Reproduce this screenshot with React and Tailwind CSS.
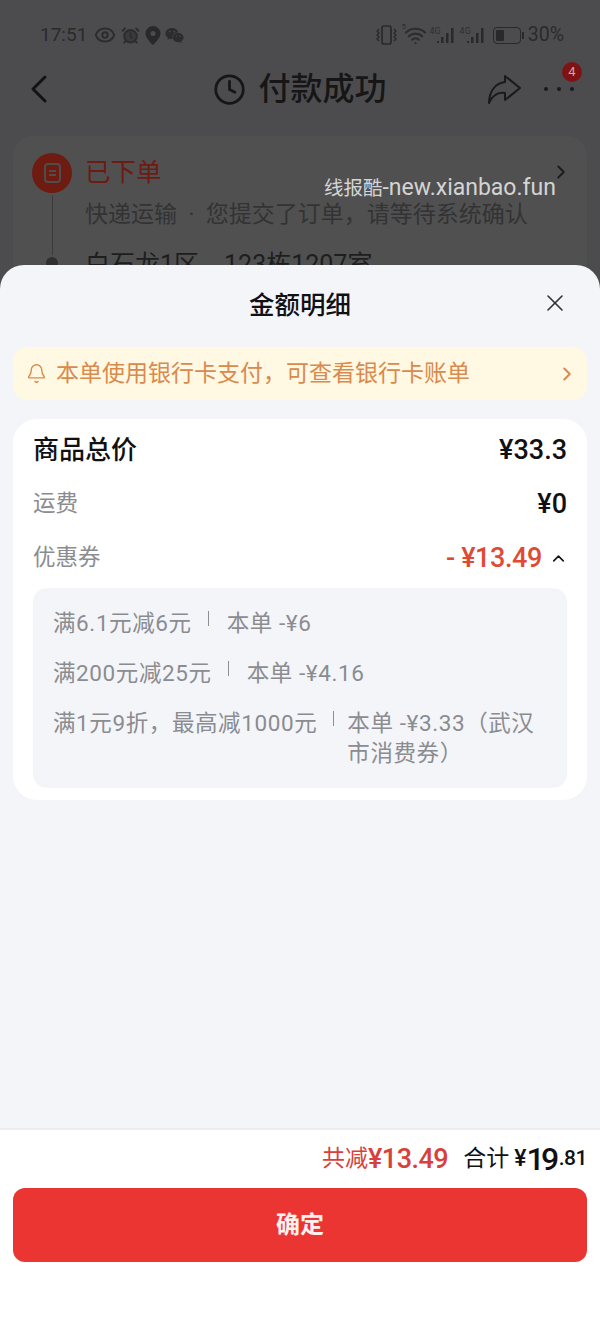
import { ChevronLeft, ChevronRight, ChevronUp, Clock, Bell, X, Wifi, Eye, AlarmClock } from "lucide-react";
import { FaWeixin } from "react-icons/fa";

const font = "font-['Roboto','Noto_Sans_CJK_SC',sans-serif]";

function Signal() {
  return (
    <div className="flex items-end">
      <span className="mb-[9px] text-[9px] leading-none text-[#2f2f30]">4G</span>
      <svg width="20" height="20" viewBox="0 0 20 20" className="-ml-[7px]">
        <rect x="3" y="16" width="2" height="2" fill="#29292a" />
        <rect x="7" y="12" width="2.5" height="6" fill="#29292a" />
        <rect x="12" y="8" width="2.5" height="10" fill="#29292a" />
        <rect x="17" y="3" width="2.5" height="15" fill="#29292a" />
      </svg>
    </div>
  );
}

function StatusBar() {
  return (
    <div className="flex h-[56px] items-center justify-between pl-[40px] pr-[36px] pt-[14px] text-[#2c2c2d]">
      <div className="flex items-center">
        <span className="text-[19px] text-[#2a2a2b]">17:51</span>
        <Eye size={22} strokeWidth={2.2} className="ml-[7px]" />
        <AlarmClock size={19} strokeWidth={2.4} className="ml-[5px] fill-[#3a3a3b]" />
        <svg width="16" height="19" viewBox="0 0 16 19" className="ml-[5px]">
          <path fillRule="evenodd" fill="#29292a" d="M8 0a7.5 7.5 0 0 1 7.5 7.5C15.5 12.5 8 19 8 19S.5 12.5.5 7.5A7.5 7.5 0 0 1 8 0Zm0 5a2.5 2.5 0 1 0 0 5 2.5 2.5 0 0 0 0-5Z" />
        </svg>
        <FaWeixin size={19} className="ml-[4px]" />
      </div>
      <div className="flex items-center">
        <svg width="21" height="22" viewBox="0 0 21 22" fill="none" stroke="#29292a" strokeWidth="1.7">
          <rect x="6" y="2" width="9" height="18" rx="2" />
          <path d="M3 5l-2 2 2 2-2 2 2 2-2 2 2 2M18 5l2 2-2 2 2 2-2 2 2 2-2 2" strokeWidth="1.3" />
        </svg>
        <div className="relative ml-[5px]">
          <span className="absolute -left-[1px] -top-[1px] text-[8px] leading-none">5</span>
          <Wifi size={23} strokeWidth={2.2} className="ml-[2px]" />
        </div>
        <div className="ml-[2px]"><Signal /></div>
        <div className="ml-[6px]"><Signal /></div>
        <div className="ml-[9px] flex items-center">
          <div className="flex h-[17px] w-[28px] items-center rounded-[4px] border-[1.5px] border-[#29292a] p-[2px]">
            <div className="h-full w-[8px] rounded-[1px] bg-[#29292a]" />
          </div>
          <div className="ml-[1px] h-[7px] w-[2px] bg-[#29292a]" />
        </div>
        <span className="ml-[4px] text-[19.5px] text-[#2a2a2b]">30%</span>
      </div>
    </div>
  );
}

function DimmedPage() {
  return (
    <div className="relative h-[265px] overflow-hidden">
      <StatusBar />
      <div className="relative flex h-[66px] items-center justify-center">
        <ChevronLeft size={48} strokeWidth={1.5} className="absolute left-[15px] text-[#131314]" />
        <Clock size={33} strokeWidth={2} className="text-[#161617]" />
        <span className="ml-[12px] text-[32px] font-medium leading-none text-[#161617]">付款成功</span>
        <svg width="34" height="30" viewBox="0 0 34 30" fill="none" stroke="#1a1a1b" strokeWidth="2" strokeLinejoin="round" className="absolute left-[487px] top-[18px]">
          <path d="M18 2L33 14L18 26V19C10 18 5 22 2 29C2 18 8 9 18 8Z" />
        </svg>
        <div className="absolute left-[544px] top-[31px] flex gap-[9px]">
          <span className="h-[4px] w-[4px] rounded-full bg-[#1a1a1b]" />
          <span className="h-[4px] w-[4px] rounded-full bg-[#1a1a1b]" />
          <span className="h-[4px] w-[4px] rounded-full bg-[#1a1a1b]" />
        </div>
        <span className="absolute left-[562px] top-[6px] flex h-[20px] w-[20px] items-center justify-center rounded-full bg-[#7f1313] text-[13px] text-[#c9a7a7]">4</span>
      </div>
      <div className="mx-[13px] mt-[14px] h-[200px] rounded-t-[20px] bg-[#505051] pl-[19px] pr-[15px] pt-[17px]">
        <div className="flex">
          <div className="flex w-[40px] shrink-0 flex-col items-center">
            <div className="flex h-[40px] w-[40px] items-center justify-center rounded-full bg-[#6e1b12]">
              <div className="flex h-[20px] w-[17px] flex-col items-center justify-center gap-[2px] rounded-[4px] border-2 border-[#4d4d4e]">
                <span className="h-[2px] w-[7px] bg-[#4d4d4e]" />
                <span className="h-[2px] w-[7px] bg-[#4d4d4e]" />
              </div>
            </div>
            <div className="mt-[2px] h-[60px] w-px bg-[#3a3a3b]" />
            <div className="mt-[2px] h-[12px] w-[12px] rounded-full bg-[#303031]" />
          </div>
          <div className="ml-[13px] min-w-0 flex-1">
            <div className="flex items-start justify-between">
              <span className="text-[25.5px] leading-[38px] text-[#6e1b12]">已下单</span>
              <ChevronRight size={22} strokeWidth={2} className="mt-[8px] text-[#1b1b1c]" />
            </div>
            <div className="mt-[6px] whitespace-pre text-[23px] leading-[36px] text-[#333334]">快递运输  ·  您提交了订单，请等待系统确认</div>
            <div className="mt-[14px] whitespace-pre text-[25px] leading-[36px] text-[#1e1e1f]">白石龙1区，123栋1207室</div>
          </div>
        </div>
      </div>
      <div className="absolute left-[324px] top-[174px] whitespace-nowrap text-[19.5px] leading-[28px] text-[#d4d4d4]">
        线报酷<span className="text-[23px]">-new.xianbao.fun</span>
      </div>
    </div>
  );
}

function CouponRow({ rule, detail, gap = "mr-[18px]" }) {
  return (
    <div className="flex items-start">
      <span className="shrink-0 whitespace-nowrap">{rule}</span>
      <span className={`ml-[16px] mt-[3px] h-[15px] w-px shrink-0 bg-[#8d8e92] ${gap}`} />
      <span>{detail}</span>
    </div>
  );
}

function Sheet() {
  return (
    <div className="flex h-[1058px] flex-col rounded-t-[24px] bg-[#f4f5f9]">
      <div className="relative flex h-[82px] items-center justify-center">
        <span className="text-[25.5px] font-medium leading-none text-[#111114]">金额明细</span>
        <X size={28} strokeWidth={1.4} className="absolute right-[31px] top-[24px] text-[#333336]" />
      </div>
      <div className="mx-[13px] flex h-[53px] items-center rounded-[14px] bg-[#fff8e3] pl-[13px] pr-[9px] text-[#d98a4d]">
        <Bell size={21} strokeWidth={1.6} />
        <span className="ml-[9px] flex-1 text-[23px] leading-none">本单使用银行卡支付，可查看银行卡账单</span>
        <ChevronRight size={22} strokeWidth={2.2} />
      </div>
      <div className="mx-[13px] mt-[19px] rounded-[24px] bg-white px-[20px] pb-[12px] pt-[11px]">
        <div className="flex h-[40px] items-center justify-between text-[#111114]">
          <span className="text-[26px] font-medium">商品总价</span>
          <span className="text-[27px] font-medium">¥33.3</span>
        </div>
        <div className="mt-[14px] flex h-[40px] items-center justify-between">
          <span className="text-[22.5px] text-[#8b8c90]">运费</span>
          <span className="text-[27px] font-medium text-[#111114]">¥0</span>
        </div>
        <div className="mt-[14px] flex h-[40px] items-center justify-between">
          <span className="text-[22.5px] text-[#8b8c90]">优惠券</span>
          <div className="flex items-center text-[#e04a33]">
            <span className="text-[27px] font-medium tracking-[-0.4px]">- ¥13.49</span>
            <ChevronUp size={19} strokeWidth={2} className="ml-[7px] mr-[-1px] text-[#111114]" />
          </div>
        </div>
        <div className="mt-[10px] flex flex-col gap-[20px] rounded-[14px] bg-[#f4f5f9] pb-[20px] pl-[20px] pr-[20px] pt-[20px] text-[22.5px] leading-[30px] tracking-[0.6px] text-[#8b8c90]">
          <CouponRow rule="满6.1元减6元" detail="本单 -¥6" />
          <CouponRow rule="满200元减25元" detail="本单 -¥4.16" />
          <CouponRow rule="满1元9折，最高减1000元" detail="本单 -¥3.33（武汉市消费券）" gap="mr-[13px]" />
        </div>
      </div>
      <div className="mt-auto h-[195px] border-t-2 border-[#ececee] bg-white px-[13px]">
        <div className="flex h-[58px] items-center justify-end">
          <span className="text-[23px] text-[#d8413b]">共减</span>
          <span className="text-[27px] font-medium tracking-[-0.5px] text-[#d8413b]">¥13.49</span>
          <span className="ml-[15px] text-[23px] text-[#111114]">合计</span>
          <span className="ml-[5px] text-[23px] font-medium text-[#111114]">¥</span>
          <span className="text-[32px] font-medium tracking-[-3.5px] text-[#111114]">19</span>
          <span className="ml-[3px] text-[21px] font-medium tracking-[-0.5px] text-[#111114]">.81</span>
        </div>
        <button className="flex h-[74px] w-full items-center justify-center rounded-[12px] bg-[#ea3533] text-[24px] font-bold text-[#fdf0ee]">确定</button>
      </div>
    </div>
  );
}

export default function App() {
  return (
    <div className={`h-[1323px] w-[600px] overflow-hidden bg-[#4c4c4e] ${font}`}>
      <DimmedPage />
      <Sheet />
    </div>
  );
}
